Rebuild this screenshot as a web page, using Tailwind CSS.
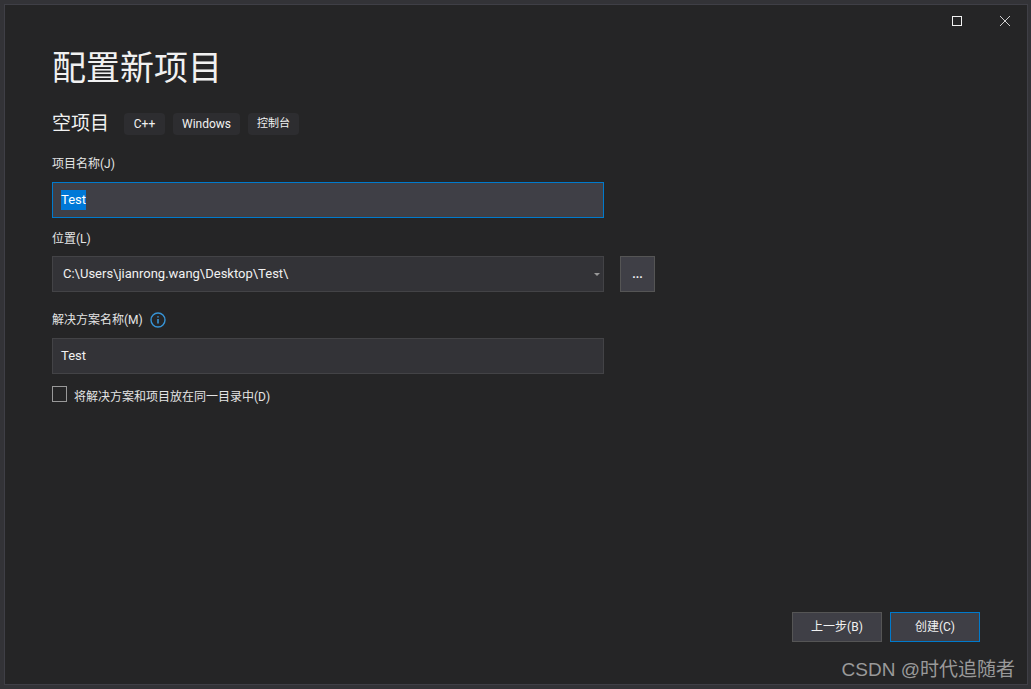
<!DOCTYPE html>
<html lang="zh-CN">
<head>
  <meta charset="UTF-8">
  <title>配置新项目</title>
  <script src="https://cdn.jsdelivr.net/npm/@tailwindcss/browser@4"></script>
</head>
<body class="h-screen overflow-hidden bg-[#333337] font-['Roboto','Noto_Sans_CJK_SC',sans-serif] text-[#f1f1f1]">
  <div class="relative ml-[4px] mr-[3px] mt-[4px] h-[681px] border border-[#3f3f46] bg-[#252526] pl-[47px] pt-[38px]">
    <div class="absolute right-[16px] top-[10px] flex items-center gap-[36px]">
      <svg width="12" height="12" viewBox="0 0 12 12" fill="none" stroke="#f1f1f1"><rect x="1.5" y="1.5" width="9" height="9"/></svg>
      <svg width="12" height="12" viewBox="0 0 12 12" fill="none" stroke="#d0d0d0"><path d="M1 1L11 11M11 1L1 11"/></svg>
    </div>

    <h1 class="h-[50px] text-[34px] leading-[50px]">配置新项目</h1>

    <div class="mt-[19px] flex h-[24px] items-center">
      <span class="mt-[1px] w-[72px] text-[19px]">空项目</span>
      <span class="flex h-[22px] w-[41px] items-center justify-center rounded-[4px] bg-[#2d2d30] text-[12px]">C++</span>
      <span class="ml-[8px] flex h-[22px] w-[67px] items-center justify-center rounded-[4px] bg-[#2d2d30] text-[12px]">Windows</span>
      <span class="ml-[8px] flex h-[22px] w-[51px] items-center justify-center rounded-[4px] bg-[#2d2d30] text-[11px]">控制台</span>
    </div>

    <label class="mt-[18px] block h-[20px] text-[12px] leading-[20px] text-[#e4e4e4]">项目名称(J)</label>
    <div class="mt-[8px] flex h-[36px] w-[552px] items-center border border-[#007acc] bg-[#3f3f46] pl-[8px] text-[13px]">
      <span class="bg-[#0078d7] text-white">Test</span>
    </div>

    <label class="mt-[11px] block h-[20px] text-[12px] leading-[20px] text-[#e4e4e4]">位置(L)</label>
    <div class="mt-[7px] flex items-center gap-[16px]">
      <div class="flex h-[36px] w-[552px] items-center justify-between border border-[#434346] bg-[#333337] pl-[10px] pr-[3px] text-[13px]">
        <span>C:\Users\jianrong.wang\Desktop\Test\</span>
        <span class="h-0 w-0 border-x-[3px] border-t-[3px] border-x-transparent border-t-[#999999]"></span>
      </div>
      <div class="flex h-[36px] w-[35px] items-center justify-center border border-[#555555] bg-[#3f3f46] text-[12px] font-bold">...</div>
    </div>

    <div class="mt-[18px] flex h-[20px] items-center gap-[7px] text-[12px] text-[#e4e4e4]">
      <span>解决方案名称(M)</span>
      <svg width="16" height="16" viewBox="0 0 16 16" fill="none" stroke="#3794d6" stroke-width="1.4"><circle cx="8" cy="8" r="7"/><path d="M8 7v4.5M8 4.2v1.4" stroke-width="1.6"/></svg>
    </div>
    <div class="mt-[8px] flex h-[36px] w-[552px] items-center border border-[#434346] bg-[#333337] pl-[8px] text-[13px]">Test</div>

    <div class="mt-[12px] flex gap-[7px] text-[12px] text-[#e4e4e4]">
      <span class="h-[16px] w-[15px] border border-[#999999]"></span>
      <span class="mt-[2px] leading-[18px]">将解决方案和项目放在同一目录中(D)</span>
    </div>

    <div class="absolute right-[47px] top-[607px] flex gap-[8px] text-[12px]">
      <div class="flex h-[30px] w-[90px] items-center justify-center border border-[#555555] bg-[#3f3f46]">上一步(B)</div>
      <div class="flex h-[30px] w-[90px] items-center justify-center border border-[#007acc] bg-[#3f3f46]">创建(C)</div>
    </div>

    <div class="absolute right-[12px] top-[652px] font-['Liberation_Sans','Noto_Sans_CJK_SC',sans-serif] text-[19px] leading-[26px] text-[#9a9a9a]">CSDN @时代追随者</div>
  </div>
</body>
</html>
